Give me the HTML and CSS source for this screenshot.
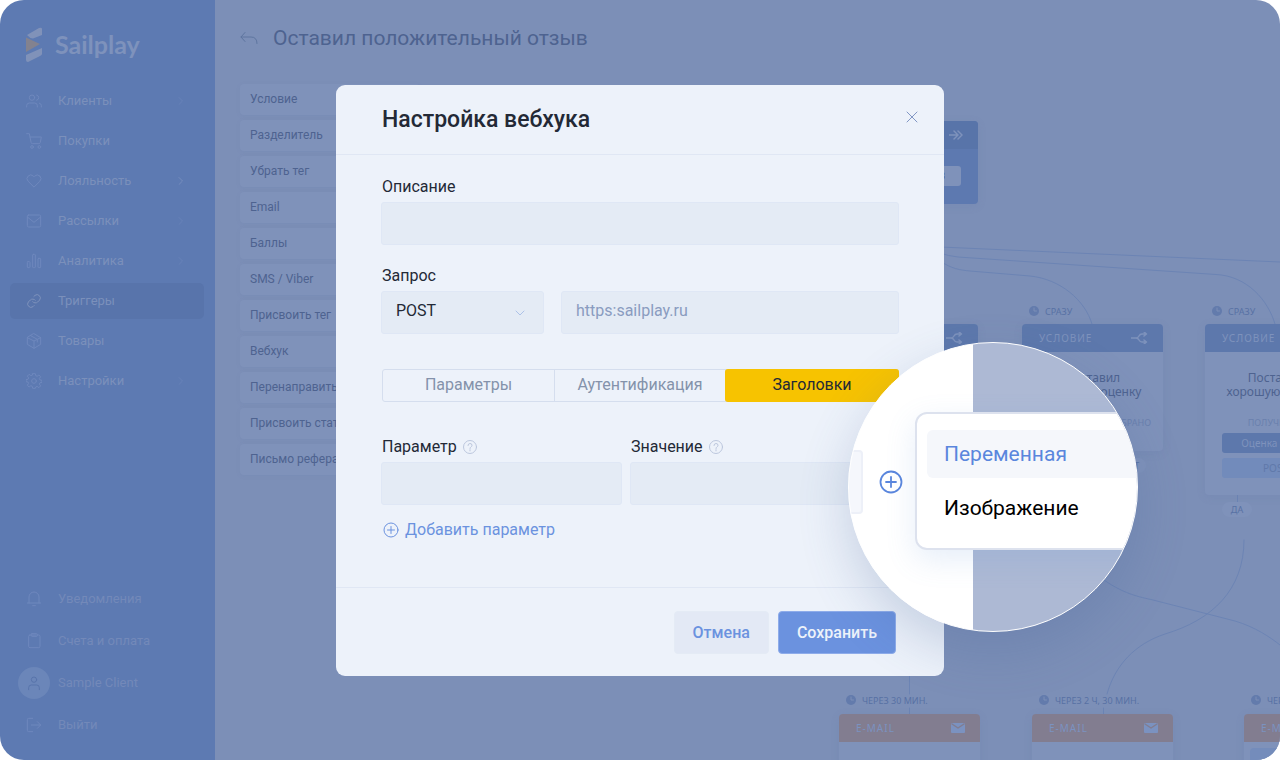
FILE: index.html
```html
<!DOCTYPE html>
<html lang="ru">
<head>
<meta charset="utf-8">
<title>Настройка вебхука</title>
<link rel="stylesheet" href="styles.css">
</head>
<body>
<div class="app">
  <aside class="sidebar">
    <div class="logo">
      <svg width="18" height="36" viewBox="0 0 18 36"><path class="logo-sail" d="M2 8 14 1q3-1 3 1v6L8 11.500q-3 0-6-3.500zM1 28l16-7v6q0 1-2 2L3 35q-2 0-2-2z"/><path class="logo-flag" d="M1 10.500 15 17 1 25z"/></svg>
      <span>Sailplay</span>
    </div>
    <nav class="menu">
      <a class="item" href="#"><svg class="ico" viewBox="0 0 24 24"><path d="M17 21v-2a4 4 0 0 0-4-4H5a4 4 0 0 0-4 4v2M23 21v-2a4 4 0 0 0-3-3.900M16 3.100a4 4 0 0 1 0 7.800"/><circle cx="9" cy="7" r="4"/></svg><span>Клиенты</span><svg class="chev" viewBox="0 0 6 8"><path d="M1 0.500 4.500 4 1 7.500"/></svg></a>
      <a class="item" href="#"><svg class="ico" viewBox="0 0 24 24"><path d="M1 1h4l2.700 13.400a2 2 0 0 0 2 1.600h9.700a2 2 0 0 0 2-1.600L23 6H6"/><circle cx="9" cy="21" r="2"/><circle cx="20" cy="21" r="2"/></svg><span>Покупки</span></a>
      <a class="item" href="#"><svg class="ico" viewBox="0 0 24 24"><path d="M20.800 4.600a5.500 5.500 0 0 0-7.800 0L12 5.700l-1-1.100a5.500 5.500 0 0 0-7.800 7.800L12 21.200l8.800-8.800a5.500 5.500 0 0 0 0-7.800z"/></svg><span>Лояльность</span><svg class="chev chev-strong" viewBox="0 0 6 8"><path d="M1 0.500 4.500 4 1 7.500"/></svg></a>
      <a class="item" href="#"><svg class="ico" viewBox="0 0 24 24"><rect x="2" y="3" width="20" height="18" rx="2"/><path d="m2 6 10 8 10-8"/></svg><span>Рассылки</span><svg class="chev" viewBox="0 0 6 8"><path d="M1 0.500 4.500 4 1 7.500"/></svg></a>
      <a class="item" href="#"><svg class="ico" viewBox="0 0 24 24"><rect x="2" y="13" width="4" height="9" rx="1"/><rect x="10" y="2" width="4" height="20" rx="1"/><rect x="18" y="8" width="4" height="14" rx="1"/></svg><span>Аналитика</span><svg class="chev" viewBox="0 0 6 8"><path d="M1 0.500 4.500 4 1 7.500"/></svg></a>
      <a class="item active" href="#"><svg class="ico" viewBox="0 0 24 24"><path d="M10 13a5 5 0 0 0 7.500.500l3-3a5 5 0 0 0-7-7l-1.700 1.700M14 11a5 5 0 0 0-7.500-.500l-3 3a5 5 0 0 0 7 7l1.700-1.700"/></svg><span>Триггеры</span></a>
      <a class="item" href="#"><svg class="ico" viewBox="0 0 24 24"><path d="M2 7v10l10 6 10-6V7L12 1zM2 7l10 5 10-5M12 12v11M7 4l10 5.500v4"/></svg><span>Товары</span></a>
      <a class="item" href="#"><svg class="ico" viewBox="0 0 24 24"><circle cx="12" cy="12" r="3.500"/><path d="M10 1h4l.600 3 2.100.900L19.300 3 22 5.700l-2 2.500 1 2.200 3 .600v3l-3 .600-1 2.100 2 2.600-2.700 2.700-2.600-1.900-2.100.900L14 23h-4l-.600-3-2.100-.900L4.700 21 2 18.300l1.900-2.600L3 13.600 0 13v-3l3-.600 1-2.100L2 4.700 4.700 2l2.600 2 2.100-.900z"/></svg><span>Настройки</span><svg class="chev" viewBox="0 0 6 8"><path d="M1 0.500 4.500 4 1 7.500"/></svg></a>
    </nav>
    <nav class="menu menu-bottom">
      <a class="item" href="#"><svg class="ico" viewBox="0 0 24 24"><path d="M2 18h20M4.500 18V9a7.500 7.500 0 0 1 15 0v9M10 22h4"/></svg><span>Уведомления</span></a>
      <a class="item" href="#"><svg class="ico" viewBox="0 0 24 24"><rect x="4" y="3" width="17" height="19" rx="2"/><rect x="8" y="1" width="9" height="4" rx="1"/></svg><span>Счета и оплата</span></a>
      <a class="item" href="#"><i class="avatar"><svg class="ico" viewBox="0 0 24 24"><circle cx="12" cy="7" r="4"/><path d="M4 22v-3a4 4 0 0 1 4-4h8a4 4 0 0 1 4 4v3"/></svg></i><span>Sample Client</span></a>
      <a class="item" href="#"><svg class="ico" viewBox="0 0 24 24"><path d="M10 2H4a2 2 0 0 0-2 2v16a2 2 0 0 0 2 2h6M8 12h14M17 7l5 5-5 5"/></svg><span>Выйти</span></a>
    </nav>
  </aside>

  <main class="main">
    <div class="canvas">
      <svg class="wires" width="1065" height="760"><g transform="translate(-215 0)">
        <path d="M940 247 1280 262"/>
        <path d="M940 253Q948 256 958 257L1216 274.500C1247 276 1268 300 1275 324"/>
        <path d="M940 261C952 269 960 270 970 271L1030 276C1060 279 1085 300 1092 324"/>
        <path d="M1244 540C1244 590 1212 620 1165 634C1135 644 1115 665 1107 694"/>
        <path d="M1100 577C1122 594 1140 597 1153 600L1235 621C1255 627 1270 637 1280 645"/>
        <path d="M909.500 676v18M909.500 708v6M1103.500 708v6M1237.500 495v8"/>
      </g></svg>

      <section class="node node-start">
        <header><span></span><svg width="14" height="10" viewBox="0 0 14 10"><path d="M0 5h8M5 1l4 4-4 4M9 1l4 4-4 4"/></svg></header>
        <div class="chip-light">КЛИЕНТОВ</div>
      </section>
      <section class="node node-a"><header><span>УСЛОВИЕ</span><svg width="17" height="12" viewBox="0 0 17 12"><path d="M0 6h5q2 0 3-2t3-2h4M5 6q2 0 3 2t3 2h4M13 0l2.500 2L13 4M13 8l2.500 2L13 12"/></svg></header></section>

      <div class="time t-b"><svg width="10" height="10" viewBox="0 0 10 10"><circle cx="5" cy="5" r="5"/><path d="M5 2v3h2.500"/></svg>СРАЗУ</div>
      <section class="node node-b">
        <header><span>УСЛОВИЕ</span><svg width="17" height="12" viewBox="0 0 17 12"><path d="M0 6h5q2 0 3-2t3-2h4M5 6q2 0 3 2t3 2h4M13 0l2.500 2L13 4M13 8l2.500 2L13 12"/></svg></header>
        <p>Поставил<br>хорошую оценку</p>
        <small class="right">НЕ ВЫБРАНО</small>
      </section>
      <span class="pill p-no">НЕТ</span>

      <div class="time t-c"><svg width="10" height="10" viewBox="0 0 10 10"><circle cx="5" cy="5" r="5"/><path d="M5 2v3h2.500"/></svg>СРАЗУ</div>
      <section class="node node-c">
        <header><span>УСЛОВИЕ</span></header>
        <p>Поставил<br>хорошую оценку</p>
        <small>ПОЛУЧИЛ(А)</small>
        <div class="chip chip-dark">Оценка в пост</div>
        <div class="chip">POST</div>
      </section>
      <span class="pill p-yes">ДА</span>

      <div class="time t-d"><svg width="10" height="10" viewBox="0 0 10 10"><circle cx="5" cy="5" r="5"/><path d="M5 2v3h2.500"/></svg>ЧЕРЕЗ 30 МИН.</div>
      <section class="node mail node-d"><header><span>E-MAIL</span><svg width="14" height="10" viewBox="0 0 14 10"><rect width="14" height="10" rx="1"/><path d="m1 1 6 4 6-4"/></svg></header></section>
      <div class="time t-e"><svg width="10" height="10" viewBox="0 0 10 10"><circle cx="5" cy="5" r="5"/><path d="M5 2v3h2.500"/></svg>ЧЕРЕЗ 2 Ч, 30 МИН.</div>
      <section class="node mail node-e"><header><span>E-MAIL</span><svg width="14" height="10" viewBox="0 0 14 10"><rect width="14" height="10" rx="1"/><path d="m1 1 6 4 6-4"/></svg></header></section>
      <div class="time t-f"><svg width="10" height="10" viewBox="0 0 10 10"><circle cx="5" cy="5" r="5"/><path d="M5 2v3h2.500"/></svg>ЧЕРЕЗ</div>
      <section class="node mail node-f"><header><span>E-MAIL</span></header><div class="mail-chip"></div></section>
    </div>

    <div class="top">
      <a href="#" class="back" aria-label="Назад"><svg width="18" height="12" viewBox="0 0 18 12"><path d="M5 0.500 1 5l4 4.500M1 5h10q6 0 6 6.500"/></svg></a>
      <h1>Оставил положительный отзыв</h1>
    </div>
    <ul class="blocks">
      <li>Условие</li><li>Разделитель</li><li>Убрать тег</li><li>Email</li><li>Баллы</li><li>SMS / Viber</li><li>Присвоить тег</li><li>Вебхук</li><li>Перенаправить</li><li>Присвоить статус</li><li>Письмо рефералу</li>
    </ul>
  </main>

  <div class="overlay">
    <div class="dialog-wrap">
      <form class="dialog">
        <header class="dialog-head">
          <h2>Настройка вебхука</h2>
          <button type="button" class="close" aria-label="Закрыть"><svg width="12" height="12" viewBox="0 0 12 12"><path d="m1 1 10 10M11 1 1 11"/></svg></button>
        </header>
        <div class="dialog-body">
          <div class="field"><label for="desc">Описание</label><input id="desc" type="text"></div>
          <div class="field">
            <label for="method">Запрос</label>
            <div class="request">
              <div class="select"><select id="method"><option>POST</option></select><svg width="10" height="6" viewBox="0 0 10 6"><path d="m1 1 4 4 4-4"/></svg></div>
              <input type="text" placeholder="https:sailplay.ru" aria-label="Адрес запроса">
            </div>
          </div>
          <div class="tabs">
            <button type="button">Параметры</button><button type="button">Аутентификация</button><button type="button" class="on">Заголовки</button>
          </div>
          <div class="pair">
            <div class="field"><label for="param">Параметр <svg class="help" width="14" height="14" viewBox="0 0 14 14"><circle cx="7" cy="7" r="6.500"/><path d="M5 5.500Q5 3.500 7 3.500t2 1.800Q9 6.300 8 6.900T7 8.500M7 9.700v1.200"/></svg></label><input id="param" type="text"></div>
            <div class="field"><label for="value">Значение <svg class="help" width="14" height="14" viewBox="0 0 14 14"><circle cx="7" cy="7" r="6.500"/><path d="M5 5.500Q5 3.500 7 3.500t2 1.800Q9 6.300 8 6.900T7 8.500M7 9.700v1.200"/></svg></label><input id="value" type="text"></div>
          </div>
          <button type="button" class="add"><svg width="16" height="16" viewBox="0 0 16 16"><circle cx="8" cy="8" r="7"/><path d="M8 4.500v7M4.500 8h7"/></svg>Добавить параметр</button>
        </div>
        <footer class="dialog-foot">
          <button type="button" class="btn">Отмена</button>
          <button type="submit" class="btn primary">Сохранить</button>
        </footer>
      </form>
      <div class="lens">
        <div class="lens-field"></div>
        <button type="button" class="lens-add" aria-label="Добавить"><svg width="24" height="24" viewBox="0 0 24 24"><circle cx="12" cy="12" r="10.500"/><path d="M12 7v10M7 12h10"/></svg></button>
        <div class="popup">
          <button type="button" class="picked">Переменная</button>
          <button type="button">Изображение</button>
        </div>
      </div>
    </div>
  </div>
</div>
</body>
</html>
```
FILE: styles.css
```css
* { box-sizing: border-box; }
body { margin: 0; background: #fff; font-family: Roboto, "Noto Sans", sans-serif; }
svg { fill: none; stroke: currentColor; stroke-linecap: round; stroke-linejoin: round; flex: none; }
button, input, select { font: inherit; margin: 0; }
button { border: 0; background: none; padding: 0; cursor: pointer; }
a { color: inherit; text-decoration: none; }
h1, h2, p, ul { margin: 0; padding: 0; }

.app {
  position: relative;
  display: grid;
  grid-template-columns: 215px 1fr;
  min-height: 100vh;
  border-radius: 24px;
  overflow: hidden;
}

/* Sidebar */
.sidebar { display: flex; flex-direction: column; background: #5d7ab2; color: #7b90bb; padding: 26px 11px 14px 10px; }
.logo { display: flex; align-items: center; gap: 12px; height: 38px; padding-left: 15px; font: 700 25px/34px Lato, sans-serif; color: #7e92bc; }
.logo span { padding-bottom: 3px; }
.logo svg { stroke: none; }
.logo-sail { fill: #8092b9; }
.logo-flag { fill: #83828f; }
.menu { display: flex; flex-direction: column; gap: 4px; margin-top: 19px; font-size: 13px; }
.item { display: flex; align-items: center; gap: 16px; height: 36px; padding: 0 20px 0 16px; border-radius: 5px; }
.item span { flex: 1; padding-bottom: 2px; }
.ico { width: 16px; height: 16px; color: #6f88bd; stroke-width: 1.5; }
.chev { width: 6px; height: 8px; color: #6882b8; }
.chev-strong { color: #768dbd; }
.active { background: #5874ab; }
.active .ico { color: #7e92bc; }
.menu-bottom { gap: 6px; margin-top: auto; color: #7389b9; padding-bottom: 3px; }
.avatar { display: grid; place-items: center; width: 32px; height: 32px; margin: 0 -8px; border-radius: 50%; background: #6b86b9; }
.avatar .ico { color: #5874ab; }

/* Workspace */
.main { position: relative; background: #7c8fb7; color: #4e6390; padding: 24px 25px; overflow: hidden; }
.top { position: relative; display: flex; align-items: center; gap: 15px; height: 28px; }
.back { display: flex; color: #5e759f; }
h1 { font-size: 21px; font-weight: 400; white-space: nowrap; }
.blocks { position: relative; display: grid; gap: 5px; width: 180px; margin-top: 32px; list-style: none; font-size: 12px; line-height: 31px; }
.blocks li { height: 31px; padding-left: 10px; border-radius: 4px; background: #7f92ba; box-shadow: 0 1px 4px rgba(100, 125, 175, 0.1); }

/* Scenario canvas */
.canvas { position: absolute; inset: 0; font-family: "Noto Sans", sans-serif; }
.wires { position: absolute; left: 0; top: 0; color: #6c84b4; }
.node { position: absolute; width: 141px; border-radius: 4px; background: #7f92ba; box-shadow: 0 2px 8px rgba(90, 115, 165, 0.14); text-align: center; }
.node header { display: flex; align-items: center; justify-content: space-between; height: 28px; padding: 0 15px 0 17px; border-radius: 4px 4px 0 0; background: #5d78ac; color: #7e92bc; font-size: 10px; letter-spacing: 1px; }
.node header svg { stroke-width: 1.5; }
.node p { padding-top: 19px; font-size: 12px; line-height: 14px; }
.node small { display: block; margin-top: 18px; font-size: 9px; line-height: 12px; color: #6a80ad; }
.node small.right { padding-right: 12px; text-align: right; }
.node-start { left: 622px; top: 121px; height: 83px; background: #5d79b0; }
.node-start header { background: #5874a9; }
.chip-light { margin: 17px; padding-right: 16px; border-radius: 3px; background: #7f92ba; font-size: 9px; line-height: 20px; text-align: right; }
.node-a { left: 622px; top: 324px; height: 127px; }
.node-b { left: 807px; top: 324px; height: 127px; }
.node-c { left: 990px; top: 324px; height: 171px; }
.node-d { left: 624px; top: 714px; height: 80px; }
.node-e { left: 817px; top: 714px; height: 80px; }
.node-f { left: 1029px; top: 714px; height: 80px; }
.mail header { background: #827d90; color: #7b92c0; }
.mail header svg { color: #827d90; }
.mail header rect { fill: #7b92c0; stroke: none; }
.mail-chip { height: 30px; margin: 6px; border-radius: 4px; background: #748cbb; }
.chip { margin: 5px 17px; border-radius: 3px; background: #728bbb; color: #6079aa; font-size: 10px; line-height: 20px; white-space: nowrap; }
.chip-dark { margin-top: 4px; background: #5d78ac; color: #7e92bc; }
.time { position: absolute; display: flex; align-items: center; gap: 6px; height: 12px; font-size: 9px; color: #5871a4; white-space: nowrap; }
.time circle { fill: #637bac; stroke: none; }
.time path { stroke: #7c8fb7; }
.t-b { left: 814px; top: 305px; }
.t-c { left: 997px; top: 305px; }
.t-d { left: 631px; top: 694px; }
.t-e { left: 824px; top: 694px; }
.t-f { left: 1036px; top: 694px; }
.pill { position: absolute; width: 30px; border-radius: 8px; background: #7f92ba; color: #5871a4; font-size: 9px; line-height: 15px; text-align: center; }
.p-no { left: 901px; top: 458px; }
.p-yes { left: 1007px; top: 502px; }

/* Dialog */
.overlay { position: absolute; inset: 0; display: flex; align-items: center; justify-content: center; }
.dialog-wrap { position: relative; width: 608px; }
.dialog { border-radius: 9px; background: #edf2fa; color: #232936; font-size: 16px; }
.dialog-head { display: flex; align-items: center; justify-content: space-between; height: 70px; padding: 0 26px 0 46px; border-bottom: 1px solid #e0e7f4; }
h2 { font-size: 23px; font-weight: 500; }
.close { display: flex; padding-bottom: 5px; color: #8196c4; }
.dialog-body { padding: 22px 45px 47px; }
.field { display: grid; gap: 5px; margin-bottom: 21px; }
.field label { display: flex; align-items: center; gap: 6px; padding-left: 1px; line-height: 20px; }
.help { color: #bcc7dd; }
.field input, .field select { width: 100%; min-width: 0; height: 43px; padding: 0 14px 3px; border: 1px solid #dfe7f5; border-radius: 3px; background: #e4ebf5; color: #232936; appearance: none; outline: 0; }
.field input::placeholder { color: #8a9cc0; opacity: 1; }
.request { display: grid; grid-template-columns: 163px 1fr; gap: 17px; }
.select { position: relative; }
.select svg { position: absolute; right: 19px; top: 19px; color: #adc2e8; pointer-events: none; }
.tabs { display: grid; grid-template-columns: 172px 171px 1fr; margin: 35px 0 35px 1px; border: 1px solid #d5deee; border-radius: 3px; }
.tabs button { height: 31px; padding-bottom: 1px; color: #8492ab; border-right: 1px solid #d5deee; }
.tabs button.on { margin: -1px; height: 33px; border: 0; border-radius: 3px; background: #f7c300; color: #232936; }
.pair { display: grid; grid-template-columns: 241px 241px; gap: 8px; }
.pair .field { margin-bottom: 15px; }
.add { display: flex; align-items: center; gap: 6px; padding-left: 2px; line-height: 20px; color: #6b92df; }
.dialog-foot { display: flex; justify-content: flex-end; gap: 9px; padding: 23px 48px 22px; border-top: 1px solid #e0e7f4; }
.btn { height: 43px; padding: 0 18px; border: 1px solid #e4ebf5; border-radius: 4px; background: #e3e9f5; color: #6b92df; font-weight: 500; }
.primary { border-color: #8eacea; background: #6b92df; color: #edf2fa; }

/* Magnifier over the dialog's right edge */
.lens { position: absolute; right: -194px; bottom: 44px; width: 290px; height: 290px; border: 1px solid #fff; border-radius: 50%; overflow: hidden; background: linear-gradient(90deg, #fff 124px, #adb9d4 124px); box-shadow: 0 20px 50px rgba(70, 100, 155, 0.24); }
.lens-field { position: absolute; left: -20px; top: 107px; width: 34px; height: 64px; border: 2px solid #edf0f8; border-radius: 4px; background: #f5f7fc; }
.lens-add { position: absolute; left: 30px; top: 127px; display: flex; color: #5a86dd; }
.lens-add svg { stroke-width: 1.8; }
.popup { position: absolute; left: 66px; top: 69px; width: 260px; height: 138px; padding: 16px 10px; border: 2px solid #dde2ee; border-radius: 12px; background: #fff; box-shadow: 0 10px 30px rgba(100, 150, 220, 0.16); }
.popup button { display: block; width: 100%; height: 48px; margin-bottom: 6px; padding-left: 17px; border-radius: 6px; text-align: left; font-size: 21px; color: #000; }
.popup .picked { background: #f5f7fb; color: #5a86dd; }
```
